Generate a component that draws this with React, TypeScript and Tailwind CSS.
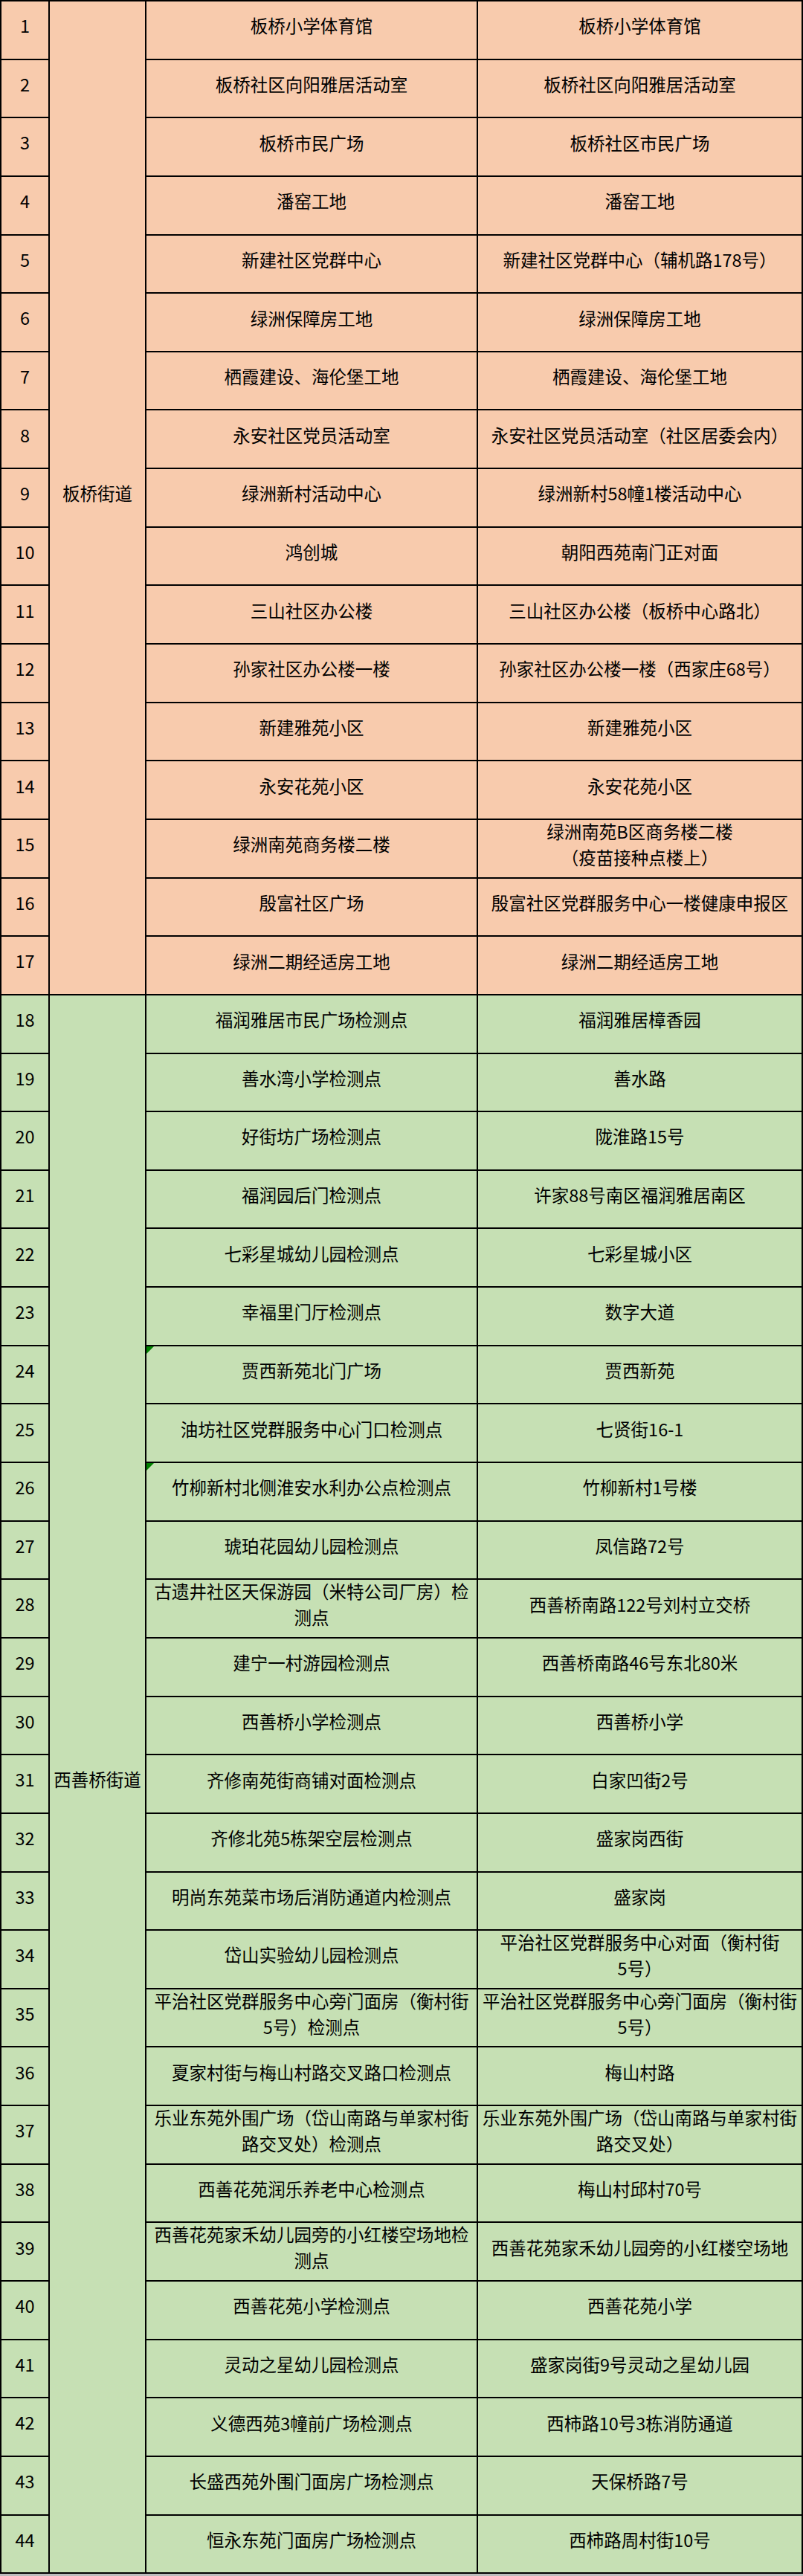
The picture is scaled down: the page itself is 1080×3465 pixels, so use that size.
import React from 'react';

type Row = {
  site: string[];
  place: string[];
  mark?: boolean;
};

const banqiao: Row[] = [
  { site: ['板桥小学体育馆'], place: ['板桥小学体育馆'] },
  { site: ['板桥社区向阳雅居活动室'], place: ['板桥社区向阳雅居活动室'] },
  { site: ['板桥市民广场'], place: ['板桥社区市民广场'] },
  { site: ['潘窑工地'], place: ['潘窑工地'] },
  { site: ['新建社区党群中心'], place: ['新建社区党群中心（辅机路178号）'] },
  { site: ['绿洲保障房工地'], place: ['绿洲保障房工地'] },
  { site: ['栖霞建设、海伦堡工地'], place: ['栖霞建设、海伦堡工地'] },
  { site: ['永安社区党员活动室'], place: ['永安社区党员活动室（社区居委会内）'] },
  { site: ['绿洲新村活动中心'], place: ['绿洲新村58幢1楼活动中心'] },
  { site: ['鸿创城'], place: ['朝阳西苑南门正对面'] },
  { site: ['三山社区办公楼'], place: ['三山社区办公楼（板桥中心路北）'] },
  { site: ['孙家社区办公楼一楼'], place: ['孙家社区办公楼一楼（西家庄68号）'] },
  { site: ['新建雅苑小区'], place: ['新建雅苑小区'] },
  { site: ['永安花苑小区'], place: ['永安花苑小区'] },
  { site: ['绿洲南苑商务楼二楼'], place: ['绿洲南苑B区商务楼二楼', '（疫苗接种点楼上）'] },
  { site: ['殷富社区广场'], place: ['殷富社区党群服务中心一楼健康申报区'] },
  { site: ['绿洲二期经适房工地'], place: ['绿洲二期经适房工地'] },
];

const xishanqiao: Row[] = [
  { site: ['福润雅居市民广场检测点'], place: ['福润雅居樟香园'] },
  { site: ['善水湾小学检测点'], place: ['善水路'] },
  { site: ['好街坊广场检测点'], place: ['陇淮路15号'] },
  { site: ['福润园后门检测点'], place: ['许家88号南区福润雅居南区'] },
  { site: ['七彩星城幼儿园检测点'], place: ['七彩星城小区'] },
  { site: ['幸福里门厅检测点'], place: ['数字大道'] },
  { site: ['贾西新苑北门广场'], place: ['贾西新苑'], mark: true },
  { site: ['油坊社区党群服务中心门口检测点'], place: ['七贤街16-1'] },
  { site: ['竹柳新村北侧淮安水利办公点检测点'], place: ['竹柳新村1号楼'], mark: true },
  { site: ['琥珀花园幼儿园检测点'], place: ['凤信路72号'] },
  { site: ['古遗井社区天保游园（米特公司厂房）检', '测点'], place: ['西善桥南路122号刘村立交桥'] },
  { site: ['建宁一村游园检测点'], place: ['西善桥南路46号东北80米'] },
  { site: ['西善桥小学检测点'], place: ['西善桥小学'] },
  { site: ['齐修南苑街商铺对面检测点'], place: ['白家凹街2号'] },
  { site: ['齐修北苑5栋架空层检测点'], place: ['盛家岗西街'] },
  { site: ['明尚东苑菜市场后消防通道内检测点'], place: ['盛家岗'] },
  { site: ['岱山实验幼儿园检测点'], place: ['平治社区党群服务中心对面（衡村街', '5号）'] },
  { site: ['平治社区党群服务中心旁门面房（衡村街', '5号）检测点'], place: ['平治社区党群服务中心旁门面房（衡村街', '5号）'] },
  { site: ['夏家村街与梅山村路交叉路口检测点'], place: ['梅山村路'] },
  { site: ['乐业东苑外围广场（岱山南路与单家村街', '路交叉处）检测点'], place: ['乐业东苑外围广场（岱山南路与单家村街', '路交叉处）'] },
  { site: ['西善花苑润乐养老中心检测点'], place: ['梅山村邱村70号'] },
  { site: ['西善花苑家禾幼儿园旁的小红楼空场地检', '测点'], place: ['西善花苑家禾幼儿园旁的小红楼空场地'] },
  { site: ['西善花苑小学检测点'], place: ['西善花苑小学'] },
  { site: ['灵动之星幼儿园检测点'], place: ['盛家岗街9号灵动之星幼儿园'] },
  { site: ['义德西苑3幢前广场检测点'], place: ['西柿路10号3栋消防通道'] },
  { site: ['长盛西苑外围门面房广场检测点'], place: ['天保桥路7号'] },
  { site: ['恒永东苑门面房广场检测点'], place: ['西柿路周村街10号'] },
];

const cell =
  'relative flex flex-col items-center justify-center border-r-2 border-b-2 border-black pb-[11px] whitespace-nowrap';

function Lines({ lines }: { lines: string[] }) {
  return (
    <>
      {lines.map((l, i) => (
        <div key={i} className="leading-[35px]">
          {l}
        </div>
      ))}
    </>
  );
}

function Group({
  rows,
  start,
  name,
  bg,
  span,
}: {
  rows: Row[];
  start: number;
  name: string;
  bg: string;
  span: string;
}) {
  return (
    <>
      {rows.map((r, i) => (
        <React.Fragment key={i}>
          <div className={`${cell} ${bg} col-start-1`}>{start + i}</div>
          {i === 0 && (
            <div className={`${cell} ${bg} col-start-2 ${span}`}>{name}</div>
          )}
          <div className={`${cell} ${bg} col-start-3`}>
            {r.mark && (
              <span className="absolute left-0 top-0 h-0 w-0 border-t-[10px] border-r-[10px] border-t-[#008000] border-r-transparent" />
            )}
            <Lines lines={r.site} />
          </div>
          <div className={`${cell} ${bg} col-start-4`}>
            <Lines lines={r.place} />
          </div>
        </React.Fragment>
      ))}
    </>
  );
}

export default function App() {
  return (
    <div className="w-[1080px] h-[3465px] bg-[#bdbdbd] overflow-hidden">
      <div
        className="grid grid-cols-[65px_130px_446px_437px] grid-rows-[repeat(44,78.65px)] border-l-2 border-t-2 border-black text-[23.5px] text-black"
        style={{ fontFamily: '"Noto Sans CJK SC", "Noto Sans", sans-serif' }}
      >
        <Group rows={banqiao} start={1} name="板桥街道" bg="bg-[#f8cbad]" span="row-[span_17/span_17]" />
        <Group rows={xishanqiao} start={18} name="西善桥街道" bg="bg-[#c6e0b4]" span="row-[span_27/span_27]" />
      </div>
    </div>
  );
}
